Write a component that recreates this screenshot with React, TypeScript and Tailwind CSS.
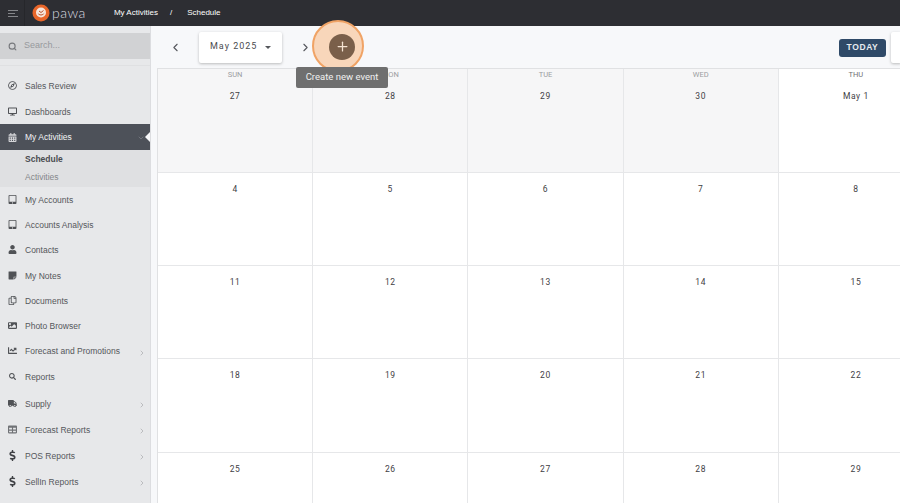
import React from "react";
import { ChevronLeft, ChevronRight, ChevronDown, Search, Plus } from "lucide-react";
import { FaRegCompass, FaDesktop, FaCalendarAlt, FaTabletAlt, FaUser, FaStickyNote, FaRegCopy, FaImage, FaChartLine, FaSearch, FaTruck, FaTable, FaDollarSign } from "react-icons/fa";

type Item = { label: string; icon: React.ReactNode; h: string; chev?: boolean };
const cls = "text-[9px] text-[#505256]";
const before: Item[] = [
  { label: "Sales Review", icon: <FaRegCompass className={cls} />, h: "h-[26px]" },
  { label: "Dashboards", icon: <FaDesktop className={cls} />, h: "h-[26px]" },
];
const after: Item[] = [
  { label: "My Accounts", icon: <FaTabletAlt className={cls} />, h: "h-[25px]" },
  { label: "Accounts Analysis", icon: <FaTabletAlt className={cls} />, h: "h-[25px]" },
  { label: "Contacts", icon: <FaUser className={cls} />, h: "h-[25px]" },
  { label: "My Notes", icon: <FaStickyNote className={cls} />, h: "h-[26px]" },
  { label: "Documents", icon: <FaRegCopy className={cls} />, h: "h-[25px]" },
  { label: "Photo Browser", icon: <FaImage className={cls} />, h: "h-[25px]" },
  { label: "Forecast and Promotions", icon: <FaChartLine className={cls} />, h: "h-[25px]", chev: true },
  { label: "Reports", icon: <FaSearch className="text-[7px] text-[#505256]" />, h: "h-[27px]" },
  { label: "Supply", icon: <FaTruck className={cls} />, h: "h-[26px]", chev: true },
  { label: "Forecast Reports", icon: <FaTable className="text-[9px] text-[#707276]" />, h: "h-[26px]", chev: true },
  { label: "POS Reports", icon: <FaDollarSign className="text-[11px] text-[#3f4145]" />, h: "h-[26px]", chev: true },
  { label: "SellIn Reports", icon: <FaDollarSign className="text-[11px] text-[#3f4145]" />, h: "h-[26px]", chev: true },
];

function Row({ item }: { item: Item }) {
  return (
    <div className={`${item.h} flex items-center shrink-0 relative`}>
      <span className="w-[25px] flex justify-center shrink-0">{item.icon}</span>
      <span className="pt-[2px] text-[8.5px] text-[#55575b] whitespace-nowrap">{item.label}</span>
      {item.chev && <ChevronRight className="absolute left-[138px] top-[11px] text-[#a4a6a9]" size={8} />}
    </div>
  );
}

const weeks = [
  ["27", "28", "29", "30", "May 1"],
  ["4", "5", "6", "7", "8"],
  ["11", "12", "13", "14", "15"],
  ["18", "19", "20", "21", "22"],
  ["25", "26", "27", "28", "29"],
];
const heads = ["SUN", "MON", "TUE", "WED", "THU"];
const heights = ["h-[104px]", "h-[93px]", "h-[93px]", "h-[94px]", "h-[93px]"];

export default function App() {
  return (
    <div className="w-[900px] h-[503px] overflow-hidden flex flex-col bg-[#f7f8fa]" style={{ fontFamily: "'Liberation Sans', Arial, sans-serif" }}>
      <header className="h-[26px] shrink-0 bg-[#2d2e33] flex items-center">
        <div className="w-[25px] h-full flex flex-col justify-center gap-[2px] pl-[8px] border-r border-[#26272b]">
          <span className="block w-[10px] h-[1px] bg-[#85868a]" />
          <span className="block w-[7px] h-[1px] bg-[#85868a]" />
          <span className="block w-[10px] h-[1px] bg-[#85868a]" />
        </div>
        <div className="flex items-center ml-[7px]">
          <svg width="18" height="18" viewBox="0 0 18 18">
            <circle cx="9" cy="9" r="8.5" fill="#e8662a" />
            <circle cx="9" cy="8.500" r="5" fill="#f7e6dc" />
            <path d="M5.500 8.500c1 2.500 6 2.500 7 0-1 4-6 4-7 0z" fill="#b9502a" />
            <path d="M7 7l2 1.500L11.500 6.500" stroke="#b9502a" fill="none" strokeWidth="1" />
          </svg>
          <span className="ml-[2px] text-[14px] leading-none text-[#dcdde1] tracking-[0.5px] font-light" style={{ fontFamily: "Lato, sans-serif" }}>pawa</span>
        </div>
        <div className="ml-[28px] flex items-center text-[8px] text-white">
          <span>My Activities</span>
          <span className="ml-[12px]">/</span>
          <span className="ml-[15px]">Schedule</span>
        </div>
      </header>
      <div className="flex flex-1 min-h-0">
        <aside className="w-[151px] shrink-0 bg-[#e7e8ea] border-r border-[#dcdde0] flex flex-col overflow-hidden">
          <div className="mt-[7px] h-[26px] shrink-0 bg-[#d1d2d4] flex items-center">
            <Search size={9} strokeWidth={3} className="ml-[8px] text-[#77797d]" />
            <span className="ml-[7px] text-[9px] text-[#97999d]">Search...</span>
          </div>
          <div className="h-[1px] mt-[6px] bg-[#dfe0e2] shrink-0" />
          <div className="mt-[6px] flex flex-col">
            {before.map((i) => <Row key={i.label} item={i} />)}
          </div>
          <div className="h-[26px] shrink-0 bg-[#4d5159] flex items-center relative">
            <span className="w-[25px] flex justify-center"><FaCalendarAlt className="text-[9px] text-[#d5d6d9]" /></span>
            <span className="text-[8.5px] text-[#f2f3f5]">My Activities</span>
            <ChevronDown size={8} className="absolute left-[137px] top-[10px] text-[#80848b]" />
            <span className="absolute right-0 top-[8px] w-0 h-0 border-y-[5px] border-y-transparent border-r-[5px] border-r-[#f7f8fa]" />
          </div>
          <div className="bg-[#dfe0e2] h-[37px] shrink-0 pl-[25px] flex flex-col">
            <div className="h-[18px] pt-[1px] text-[8.5px] font-bold text-[#4a4c50] flex items-center">Schedule</div>
            <div className="h-[19px] text-[8.5px] text-[#85878b] flex items-center">Activities</div>
          </div>
          <div className="flex flex-col">
            {after.map((i) => <Row key={i.label} item={i} />)}
          </div>
        </aside>
        <main className="flex-1 min-w-0 flex flex-col relative">
          <div className="h-[42px] shrink-0 flex items-center relative">
            <ChevronLeft size={13} className="ml-[18px] text-[#55575c]" />
            <div className="ml-[17px] w-[83px] h-[31px] bg-white rounded-[2px] shadow-[0_1px_3px_rgba(0,0,0,0.25)] flex items-center pl-[11px] text-[9px] tracking-[1px] text-[#4a4c50] whitespace-nowrap" style={{ fontFamily: "Roboto, sans-serif" }}>
              May 2025
              <span className="ml-[8px] w-0 h-0 border-x-[3px] border-x-transparent border-t-[3px] border-t-[#55575c]" />
            </div>
            <ChevronRight size={13} className="ml-[17px] text-[#55575c]" />
            <div className="flex-1" />
            <div className="w-[47px] h-[18px] mt-[1px] mr-[5px] rounded-[3px] bg-[#2f4a68] flex items-center justify-center text-[8.5px] font-bold tracking-[0.6px] text-[#e8ecf0]">TODAY</div>
            <div className="w-[10px] h-[31px] -mr-[1px] bg-white rounded-l-[2px] shadow-[0_1px_3px_rgba(0,0,0,0.25)]" />
          </div>
          <div className="ml-[6px] flex-1 min-h-0 border-t border-l border-[#e0e1e3] overflow-hidden">
            <div className="w-[776px] flex flex-col" style={{ fontFamily: "Roboto, sans-serif" }}>
              {weeks.map((w, r) => (
                <div key={r} className={`${heights[r]} grid grid-cols-5 shrink-0 border-b border-[#e6e7e9]`}>
                  {w.map((d, c) => {
                    const grey = r === 0 && c < 4;
                    return (
                      <div key={c} className={`border-r border-[#e6e7e9] flex flex-col items-center ${grey ? "bg-[#f6f6f7]" : "bg-white"}`}>
                        {r === 0 && <div className={`h-[11px] text-[7.5px] leading-[11px] ${c === 4 ? "text-[#707276]" : "text-[#9b9da1]"}`}>{heads[c]}</div>}
                        <div className={`mt-[11px] text-[8.5px] leading-[10px] tracking-[0.6px] text-[#3f4145]`}>{d}</div>
                      </div>
                    );
                  })}
                </div>
              ))}
            </div>
          </div>
          <div className="absolute left-[161px] top-[-6px] w-[52px] h-[52px] rounded-full bg-[#f8d6ba] border-[2px] border-[#f0a365] flex items-center justify-center">
            <div className="w-[26px] h-[26px] ml-[8px] mt-[1px] rounded-full bg-[#7a5f4a] flex items-center justify-center">
              <Plus size={15} strokeWidth={2} className="text-[#f5e3d3]" />
            </div>
          </div>
          <div className="absolute left-[145px] top-[41px] w-[92px] h-[21px] rounded-[2px] bg-[#6f6f6f] flex items-center justify-center text-[9.500px] text-[#f0f0f0] whitespace-nowrap" style={{ fontFamily: "Roboto, sans-serif" }}>Create new event</div>
        </main>
      </div>
    </div>
  );
}
